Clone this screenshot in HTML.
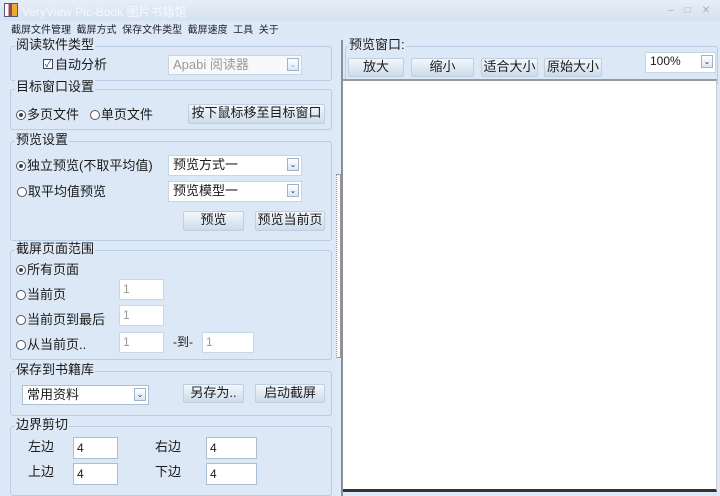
<!DOCTYPE html>
<html><head><meta charset="utf-8"><style>
*{margin:0;padding:0;box-sizing:border-box}
body{width:720px;height:496px;overflow:hidden;background:#dde9f6;font-family:"Liberation Sans","Noto Sans CJK SC",sans-serif;font-size:13px;color:#1a1a1a;position:relative}
.a{position:absolute;white-space:nowrap}
.tb{left:0;top:0;width:720px;height:21px;background:linear-gradient(#e6eef8,#d5e2f1)}
.grp{position:absolute;border:1px solid #b8cde3;border-radius:3px;background:#dce8f6}
.lbl{position:absolute;background:#dde9f6;padding:0 1px;font-size:13px;line-height:15px}
.inp{position:absolute;background:#fff;border:1px solid #a9bfd6;font-size:12px;padding-left:3px;line-height:18px}
.cmb{position:absolute;background:#fff;border:1px solid #c5d6e8;font-size:13px;padding-left:4px;line-height:17px}
.cmb i{position:absolute;right:2px;top:2px;width:12px;height:13px;border:1px solid #9db4cc;background:linear-gradient(#fff,#dbe6f2);font-style:normal;font-size:8px;line-height:11px;text-align:center;color:#334}
.btn{position:absolute;border:1px solid #c0cfdf;border-radius:2px;background:linear-gradient(#f3f7fb,#ccdbeb);text-align:center;font-size:13px;line-height:16px}
.r{display:inline-block;width:10px;height:10px;border:1px solid #556;border-radius:50%;vertical-align:-1px;margin-right:1px;position:relative;background:#fff}
.r.on:after{content:"";position:absolute;left:2px;top:2px;width:4px;height:4px;border-radius:50%;background:#345}
</style></head><body>
<div class="a tb"></div>
<div class="a" style="left:4px;top:3px;width:14px;height:14px;border:1px solid #557;background:linear-gradient(90deg,#fff 30%,#c33 30%,#c33 45%,#36a 45%,#36a 60%,#ea3 60%)"></div>
<div class="a" style="left:22px;top:3px;font-size:12px;color:#f4f8fc">VeryView Pic-Book 图片书籍馆</div>
<div class="a" style="left:668px;top:5px;font-size:10px;color:#aab">–&nbsp;&nbsp;&nbsp;&nbsp;□&nbsp;&nbsp;&nbsp;&nbsp;✕</div>
<div class="a" style="left:11px;top:21px;font-size:10px;color:#223">截屏文件管理&nbsp;&nbsp;截屏方式&nbsp;&nbsp;保存文件类型&nbsp;&nbsp;截屏速度&nbsp;&nbsp;工具&nbsp;&nbsp;关于</div>

<div class="grp" style="left:10px;top:46px;width:322px;height:35px"></div>
<div class="lbl" style="left:15px;top:37px">阅读软件类型</div>
<div class="a" style="left:43px;top:59px;width:10px;height:10px;border:1px solid #445;background:#fff;font-size:9px;line-height:8px;text-align:center;color:#235">✓</div>
<div class="a" style="left:55px;top:54px">自动分析</div>
<div class="cmb" style="left:168px;top:55px;width:134px;height:20px;color:#999;background:#f7f9fb">Apabi 阅读器<i style="color:#aab">⌄</i></div>

<div class="grp" style="left:10px;top:89px;width:322px;height:41px"></div>
<div class="lbl" style="left:15px;top:79px">目标窗口设置</div>
<div class="a" style="left:16px;top:104px"><span class="r on"></span>多页文件&nbsp;&nbsp;&nbsp;<span class="r"></span>单页文件</div>
<div class="btn" style="left:188px;top:104px;width:137px;height:20px">按下鼠标移至目标窗口</div>

<div class="grp" style="left:10px;top:141px;width:322px;height:100px"></div>
<div class="lbl" style="left:15px;top:132px">预览设置</div>
<div class="a" style="left:16px;top:155px"><span class="r on"></span>独立预览(不取平均值)</div>
<div class="a" style="left:17px;top:181px"><span class="r"></span>取平均值预览</div>
<div class="cmb" style="left:168px;top:155px;width:134px;height:21px">预览方式一<i>⌄</i></div>
<div class="cmb" style="left:168px;top:181px;width:134px;height:21px">预览模型一<i>⌄</i></div>
<div class="btn" style="left:183px;top:211px;width:61px;height:20px">预览</div>
<div class="btn" style="left:255px;top:211px;width:70px;height:20px">预览当前页</div>

<div class="grp" style="left:10px;top:250px;width:322px;height:110px"></div>
<div class="lbl" style="left:15px;top:241px">截屏页面范围</div>
<div class="a" style="left:16px;top:259px"><span class="r on"></span>所有页面</div>
<div class="a" style="left:16px;top:284px"><span class="r"></span>当前页</div>
<div class="a" style="left:16px;top:309px"><span class="r"></span>当前页到最后</div>
<div class="a" style="left:16px;top:334px"><span class="r"></span>从当前页..</div>
<div class="inp" style="left:119px;top:279px;width:45px;height:21px;color:#999;border-color:#c9d8e8">1</div>
<div class="inp" style="left:119px;top:305px;width:45px;height:21px;color:#999;border-color:#c9d8e8">1</div>
<div class="inp" style="left:119px;top:332px;width:45px;height:21px;color:#999;border-color:#c9d8e8">1</div>
<div class="a" style="left:173px;top:333px;font-size:12px">-到-</div>
<div class="inp" style="left:202px;top:332px;width:52px;height:21px;color:#999;border-color:#c9d8e8">1</div>

<div class="grp" style="left:10px;top:371px;width:322px;height:45px"></div>
<div class="lbl" style="left:15px;top:362px">保存到书籍库</div>
<div class="cmb" style="left:22px;top:385px;width:127px;height:20px;border-color:#a9bfd6">常用资料<i>⌄</i></div>
<div class="btn" style="left:183px;top:384px;width:61px;height:19px">另存为..</div>
<div class="btn" style="left:255px;top:384px;width:70px;height:19px">启动截屏</div>

<div class="grp" style="left:10px;top:426px;width:322px;height:70px"></div>
<div class="lbl" style="left:15px;top:417px">边界剪切</div>
<div class="a" style="left:28px;top:436px">左边</div>
<div class="a" style="left:28px;top:461px">上边</div>
<div class="a" style="left:155px;top:436px">右边</div>
<div class="a" style="left:155px;top:461px">下边</div>
<div class="inp" style="left:73px;top:437px;width:45px;height:22px;line-height:20px">4</div>
<div class="inp" style="left:73px;top:463px;width:45px;height:22px;line-height:20px">4</div>
<div class="inp" style="left:206px;top:437px;width:51px;height:22px;line-height:20px">4</div>
<div class="inp" style="left:206px;top:463px;width:51px;height:22px;line-height:20px">4</div>

<div class="a" style="left:336px;top:174px;width:5px;height:184px;border:1px solid #999;border-left-style:dotted;background:#f4f6f9"></div>
<div class="a" style="left:341px;top:40px;width:2px;height:456px;background:#8a8f96"></div>

<div class="grp" style="left:345px;top:46px;width:373px;height:40px;border-bottom:none"></div>
<div class="lbl" style="left:348px;top:37px">预览窗口:</div>
<div class="btn" style="left:348px;top:58px;width:56px;height:19px">放大</div>
<div class="btn" style="left:411px;top:58px;width:63px;height:19px">缩小</div>
<div class="btn" style="left:481px;top:58px;width:57px;height:19px">适合大小</div>
<div class="btn" style="left:544px;top:58px;width:58px;height:19px">原始大小</div>
<div class="cmb" style="left:645px;top:52px;width:71px;height:21px;font-size:12px">100%<i>⌄</i></div>
<div class="a" style="left:343px;top:79px;width:374px;height:413px;background:#fff;border-top:2px solid #9a9a96;border-bottom:3px solid #333;border-right:1px solid #ccc"></div>
</body></html>
